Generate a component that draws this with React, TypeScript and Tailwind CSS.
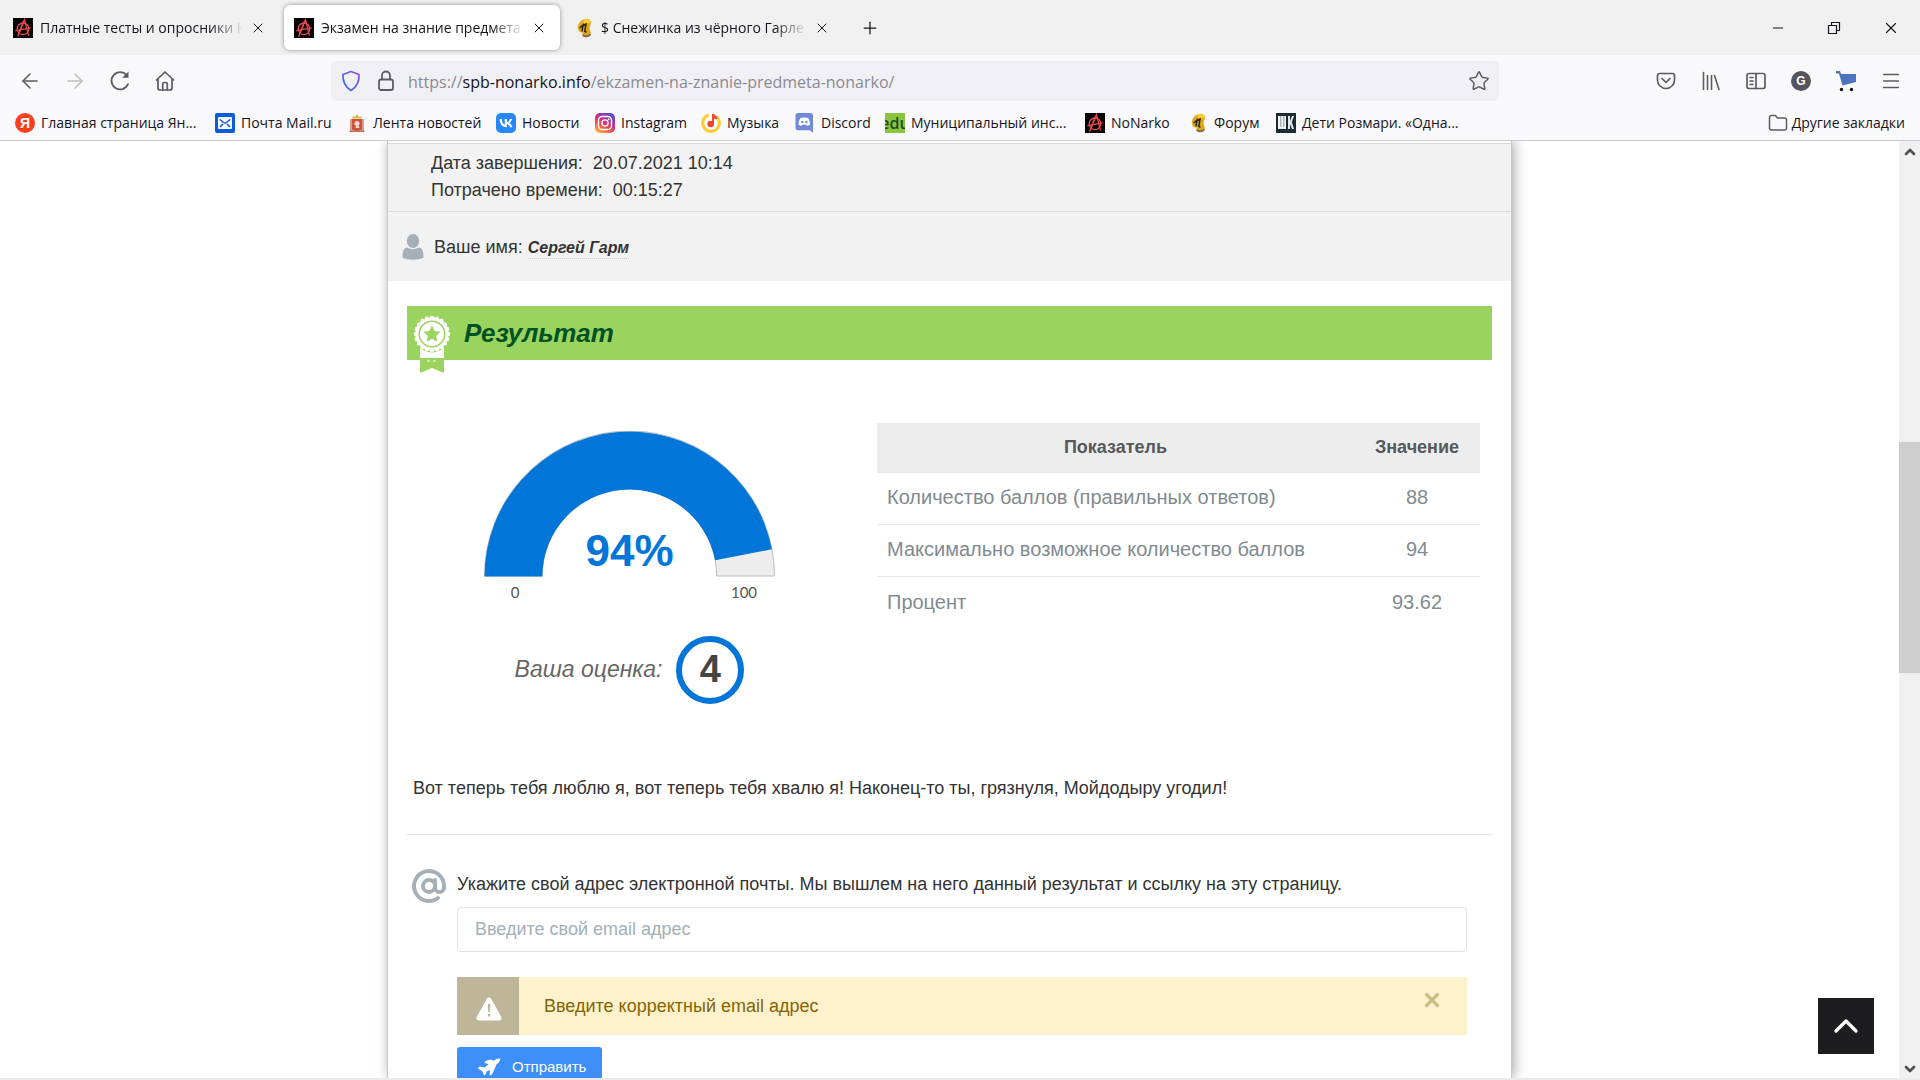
import React from "react";
import { ArrowLeft, ArrowRight, AtSign, ChevronUp, ChevronDown, Plus, X, Star, Menu, Minus } from "lucide-react";

function Anarchy() {
  return (
    <svg viewBox="0 0 20 20" className="size-5 shrink-0" aria-hidden="true">
      <rect width="20" height="20" fill="#050505" />
      <g fill="none" stroke="#e8494c" strokeWidth="1.300" strokeLinecap="round">
        <circle cx="10" cy="10.800" r="5.800" />
        <path d="M4.800 18 11.500 1.800l3.900 15.400" />
        <path d="M2.800 12.600 17.200 9.800M6.800 13.500 10.600 3" />
      </g>
    </svg>
  );
}

function Bee() {
  return (
    <svg viewBox="0 0 17 20" className="h-5 w-[17px] shrink-0" aria-hidden="true">
      <path d="M6.500 1.500c4-2 8 0 7.400 3.500-.4 2-1.400 3.500-1.400 5.500.4 2.500 1.800 4 1.200 5.500C12.500 19.500 8 20 5.500 18c-1-1 .5-2.500.5-3.500C3 15 .8 13 .8 9.800.8 6 3.500 2.800 6.500 1.500Z" fill="#dfa614" />
      <path d="M6.500 1.500c3-1.300 7-.3 7.400 2L11 5.500 6.500 4.500Z" fill="#f8cf3a" />
      <path d="M2.800 10 6 7l-1 6.500M6.500 7.500l2.500-1.300-1.200 7 1.600 1.300" fill="none" stroke="#2a2418" strokeWidth="1.500" />
      <path d="M6 16.300c2.500 1.200 5 1.200 7.500-.5l.4 1.200c-1.800 2.600-6 2.800-8.400 1Z" fill="#7a705a" />
    </svg>
  );
}

function Yandex() {
  return (
    <span className="flex size-5 shrink-0 items-center justify-center rounded-full bg-[#fc3f1d] font-['Liberation_Sans',sans-serif] text-sm leading-none font-bold text-white">Я</span>
  );
}

function MailRu() {
  return (
    <svg viewBox="0 0 20 20" className="size-5 shrink-0" aria-hidden="true">
      <rect width="20" height="20" rx="2" fill="#0b5cdb" />
      <rect x="3" y="4" width="14" height="12" rx="1" fill="#fff" />
      <path d="m5 6.500 3.500 3q1.500 1.200 3 0l3.500-3M5 14l3-3M15 14l-3-3" fill="none" stroke="#0b5cdb" strokeWidth="1.600" />
    </svg>
  );
}

function Crest() {
  return (
    <svg viewBox="0 0 20 20" className="size-5 shrink-0" aria-hidden="true">
      <path d="M5 5.500 6 3l2 1 2-3 2 3 2-1 1 2.500Z" fill="#d9b64a" />
      <path d="M3 6h3v12H3zM14 6h3v12h-3z" fill="#d3a184" />
      <path d="M5 6h10v10.500L10 19l-5-2.500Z" fill="#d0503f" />
      <path d="M8 8.500 11.500 8l1.500 3-1.500 1 1 3H8.500l.5-2.500-2-1Z" fill="#f1d9cf" />
      <path d="M2.500 17.500h15v1.500h-15z" fill="#b8735a" />
    </svg>
  );
}

function Vk() {
  return (
    <svg viewBox="0 0 20 20" className="size-5 shrink-0" aria-hidden="true">
      <rect width="20" height="20" rx="5" fill="#2787f5" />
      <path d="M10.700 14.200C6.200 14.200 3.700 11.100 3.600 6h2.200c.1 3.700 1.700 5.300 3 5.600V6h2.100v3.200c1.300-.1 2.600-1.600 3.100-3.200h2.100c-.4 2-1.800 3.400-2.900 4 1 .5 2.600 1.700 3.200 4.200h-2.300c-.5-1.500-1.700-2.700-3.200-2.900v2.900Z" fill="#fff" />
    </svg>
  );
}

function Instagram() {
  return (
    <svg viewBox="0 0 20 20" className="size-5 shrink-0" aria-hidden="true">
      <defs>
        <linearGradient id="ig" x1="0.1" y1="1" x2="0.7" y2="0">
          <stop offset="0" stopColor="#fdc14a" />
          <stop offset="0.35" stopColor="#f3563d" />
          <stop offset="0.6" stopColor="#cf2c86" />
          <stop offset="1" stopColor="#5b48cf" />
        </linearGradient>
      </defs>
      <rect width="20" height="20" rx="5" fill="url(#ig)" />
      <g fill="none" stroke="#fff" strokeWidth="1.400">
        <rect x="3.500" y="3.500" width="13" height="13" rx="3.800" />
        <circle cx="10" cy="10" r="3.100" />
      </g>
      <circle cx="13.700" cy="6.300" r="0.900" fill="#fff" />
    </svg>
  );
}

function Music() {
  return (
    <svg viewBox="0 0 20 20" className="size-5 shrink-0" aria-hidden="true">
      <circle cx="10" cy="10" r="8.300" fill="#fff" stroke="#fc3" strokeWidth="3.200" strokeDasharray="44 8" strokeDashoffset="-1" transform="rotate(-58 10 10)" />
      <circle cx="9.700" cy="11" r="3.300" fill="#f5412e" />
      <path d="M11 1h2l3.500 3.500-1 2L13 5.500V11h-2Z" fill="#f5412e" />
    </svg>
  );
}

function Discord() {
  return (
    <svg viewBox="0 0 20 20" className="size-5 shrink-0" aria-hidden="true">
      <path d="M3 0h12.500A2.500 2.500 0 0 1 18 2.500V20l-3-2.700H3A2.500 2.500 0 0 1 .5 14.800V2.500A2.500 2.500 0 0 1 3 0Z" fill="#7289da" />
      <path d="M5 5.500c2-1.300 6.500-1.300 8.500 0 1 2 1.600 4 1.500 6-1 .9-2 1.300-3 1.500l-.7-1.200H7.200L6.500 13c-1-.2-2-.6-3-1.500 0-2 .5-4 1.500-6Z" fill="#fff" />
      <circle cx="7.300" cy="9" r="1.200" fill="#7289da" />
      <circle cx="11.300" cy="9" r="1.200" fill="#7289da" />
    </svg>
  );
}

function Edu() {
  return (
    <span className="flex size-5 shrink-0 items-center justify-center overflow-hidden bg-[#8bc53f] font-['Open_Sans',sans-serif] text-base leading-none font-semibold text-[#1c4a20]">edu</span>
  );
}

function Shk() {
  return (
    <svg viewBox="0 0 20 20" className="size-5 shrink-0" aria-hidden="true">
      <rect width="20" height="20" fill="#1b2a33" />
      <path d="M2 3h2.300v11h1V3h2v11h1V3H10v13H2ZM12 3h2v5l2-5h2l-2.200 6L18 16h-2l-2-5v5h-2Z" fill="#e4e9ec" />
      <path d="M2 3h8v12H2z" fill="#ffffff" fillOpacity="0.500" />
    </svg>
  );
}

function Tab({ icon, title, active }: { icon: React.ReactNode; title: string; active?: boolean }) {
  return (
    <div
      className={
        active
          ? "flex h-[45px] w-[276px] items-center gap-[7px] rounded-md bg-white pr-[13px] pl-[10px] shadow-[0_0_4px_rgba(0,0,0,0.4)]"
          : "flex h-[45px] w-[277px] items-center gap-[7px] pr-[14px] pl-[10px]"
      }
    >
      {icon}
      <span className="min-w-0 flex-1 overflow-hidden whitespace-nowrap [mask-image:linear-gradient(to_left,transparent,black_32px)]">
        {title}
      </span>
      <button type="button" aria-label="Закрыть вкладку" className="shrink-0">
        <X className="size-4" strokeWidth={1.5} />
      </button>
    </div>
  );
}

const bookmarks = [
  { icon: <Yandex />, label: "Главная страница Ян...", width: "w-[200px]" },
  { icon: <MailRu />, label: "Почта Mail.ru", width: "w-[132px]" },
  { icon: <Crest />, label: "Лента новостей", width: "w-[149px]" },
  { icon: <Vk />, label: "Новости", width: "w-[99px]" },
  { icon: <Instagram />, label: "Instagram", width: "w-[106px]" },
  { icon: <Music />, label: "Музыка", width: "w-[94px]" },
  { icon: <Discord />, label: "Discord", width: "w-[90px]" },
  { icon: <Edu />, label: "Муниципальный инс...", width: "w-[200px]" },
  { icon: <Anarchy />, label: "NoNarko", width: "w-[106px]" },
  { icon: <Bee />, label: "Форум", width: "w-[85px]" },
  { icon: <Shk />, label: "Дети Розмари. «Одна...", width: "w-[200px]" },
];

function Toolbar() {
  return (
    <div className="flex h-[51px] items-center px-[18px] text-[#5b5b66]">
      <nav className="flex items-center gap-[21px]">
        <button type="button" aria-label="Назад"><ArrowLeft className="size-6" strokeWidth={1.6} /></button>
        <button type="button" aria-label="Вперёд" className="text-[#bdbdc3]"><ArrowRight className="size-6" strokeWidth={1.6} /></button>
        <button type="button" aria-label="Обновить">
          <svg viewBox="0 0 24 24" className="size-6" fill="none" stroke="currentColor" strokeWidth="1.800" strokeLinecap="round">
            <path d="M20 15.200A8.600 8.600 0 1 1 18.800 6.400" />
            <path d="M20.500 2.500v6.300h-6.300Z" fill="currentColor" stroke="none" />
          </svg>
        </button>
        <button type="button" aria-label="Домой">
          <svg viewBox="0 0 24 24" className="size-6" fill="none" stroke="currentColor" strokeWidth="1.700" strokeLinejoin="round" strokeLinecap="round">
            <path d="M3.500 11 12 3 20.500 11M5 10v9a2 2 0 0 0 2 2h10a2 2 0 0 0 2-2v-9" />
            <path d="M9.700 21v-6a1.500 1.500 0 0 1 1.500-1.500h1.600a1.500 1.500 0 0 1 1.500 1.500v6" />
          </svg>
        </button>
      </nav>
      <div className="ml-[154px] flex h-10 flex-1 items-center rounded-[5px] bg-[#f0f0f4] px-[9px]">
        <svg viewBox="0 0 22 22" className="size-[22px] shrink-0" fill="none" strokeWidth="1.700" strokeLinejoin="round" aria-hidden="true">
          <defs>
            <linearGradient id="shield" x1="0" y1="1" x2="1" y2="0">
              <stop offset="0" stopColor="#2d6bf0" />
              <stop offset="1" stopColor="#8f4fe8" />
            </linearGradient>
          </defs>
          <path d="M11 1.500 19 4.500c.3 6-1.500 12-8 16-6.500-4-8.300-10-8-16Z" stroke="url(#shield)" />
        </svg>
        <svg viewBox="0 0 22 22" className="ml-[13px] size-[22px] shrink-0" fill="none" stroke="currentColor" strokeWidth="1.800" aria-hidden="true">
          <rect x="4" y="9.500" width="14" height="10.500" rx="2" />
          <path d="M7 9.500V5.500a4 4 0 0 1 8 0v4" />
        </svg>
        <p className="ml-[11px] flex-1 pt-[2px] font-['Open_Sans',sans-serif] text-base whitespace-nowrap text-[#8a8a92]">
          https://<span className="text-[#15141a]">spb-nonarko.info</span>/ekzamen-na-znanie-predmeta-nonarko/
        </p>
        <button type="button" aria-label="Добавить в закладки"><Star className="size-[22px]" strokeWidth={1.6} /></button>
      </div>
      <div className="ml-[156px] flex items-center gap-[23px]">
        <button type="button" aria-label="Pocket">
          <svg viewBox="0 0 22 22" className="size-[22px]" fill="none" stroke="currentColor" strokeWidth="1.700" strokeLinecap="round" strokeLinejoin="round">
            <path d="M4.500 3.500h13a2 2 0 0 1 2 2V10a8.500 8.500 0 0 1-17 0V5.500a2 2 0 0 1 2-2Z" />
            <path d="m7 8.500 4 4 4-4" />
          </svg>
        </button>
        <button type="button" aria-label="Библиотека">
          <svg viewBox="0 0 22 22" className="size-[22px]" fill="none" stroke="currentColor" strokeWidth="1.600" strokeLinecap="round">
            <path d="M3.500 2.500v17M7.500 5.500v14M11.500 5.500v14M14.500 5.500l4.500 14" />
          </svg>
        </button>
        <button type="button" aria-label="Боковая панель">
          <svg viewBox="0 0 22 22" className="size-[22px]" fill="none" stroke="currentColor" strokeWidth="1.700" strokeLinecap="round">
            <rect x="2" y="3.500" width="18" height="15" rx="2" />
            <path d="M11 3.500v15M5 7.500h3M5 11h3M5 14.500h3" />
          </svg>
        </button>
        <button type="button" aria-label="Профиль" className="flex size-[22px] items-center justify-center">
          <span className="flex size-5 items-center justify-center rounded-full bg-[#55555f] font-['Liberation_Sans',sans-serif] text-xs font-bold text-white">G</span>
        </button>
        <button type="button" aria-label="Корзина">
          <svg viewBox="0 0 22 22" className="size-[22px]">
            <path d="M1 1h4l1 3H21v8L7.500 15.500 4 3.500H1Z" fill="#4a74bd" />
            <circle cx="6.500" cy="19.500" r="1.700" fill="#111" />
            <circle cx="16.500" cy="19.500" r="1.700" fill="#111" />
          </svg>
        </button>
        <button type="button" aria-label="Меню">
          <Menu className="size-[22px]" strokeWidth={1.7} />
        </button>
      </div>
    </div>
  );
}

function Chrome() {
  return (
    <header className="relative z-10 shrink-0 border-b border-[#cccccf] bg-[#f9f9fb] font-['Open_Sans','Noto_Sans',sans-serif] text-sm text-[#15141a]">
      <div className="flex h-[55px] items-center bg-[#f0f0f0] pl-[3px]">
        <Tab icon={<Anarchy />} title="Платные тесты и опросники Н" />
        <div className="ml-1">
          <Tab active icon={<Anarchy />} title="Экзамен на знание предмета" />
        </div>
        <div className="ml-[7px]">
          <Tab icon={<Bee />} title="$ Снежинка из чёрного Гарле" />
        </div>
        <button type="button" aria-label="Новая вкладка" className="ml-4"><Plus className="size-5" strokeWidth={1.5} /></button>
        <div className="mr-5 ml-auto flex items-center gap-[40px]">
          <button type="button" aria-label="Свернуть"><Minus className="size-4" strokeWidth={1.6} /></button>
          <button type="button" aria-label="Восстановить">
            <svg viewBox="0 0 16 16" className="size-4" fill="none" stroke="currentColor" strokeWidth="1.200">
              <path d="M2.500 5.500h8v8h-8zM5.500 5.500v-3h8v8h-3" />
            </svg>
          </button>
          <button type="button" aria-label="Закрыть"><X className="size-[18px]" strokeWidth={1.5} /></button>
        </div>
      </div>
      <Toolbar />
      <nav className="flex h-[34px] items-center px-[15px]">
        {bookmarks.map((b) => (
          <a key={b.label} href="#" className={"flex shrink-0 items-center gap-[6px] whitespace-nowrap " + b.width}>
            {b.icon}
            {b.label}
          </a>
        ))}
        <a href="#" className="ml-auto flex items-center gap-1 whitespace-nowrap">
          <svg viewBox="0 0 20 20" className="size-5" fill="none" stroke="#5b5b66" strokeWidth="1.500" aria-hidden="true">
            <path d="M1.500 15V4.500a2 2 0 0 1 2-2h4l2 2.500h7a2 2 0 0 1 2 2V15a2 2 0 0 1-2 2h-13a2 2 0 0 1-2-2Z" />
          </svg>
          Другие закладки
        </a>
      </nav>
    </header>
  );
}

function Medal() {
  const teeth = Array.from({ length: 20 }, (_, i) => (i * Math.PI) / 10);
  return (
    <svg viewBox="0 0 38 60" className="h-[60px] w-[38px]" aria-hidden="true">
      <path d="M7 34h24v10H7z" fill="#fff" />
      <path d="M7 46h24v13l-12-5-12 5Z" fill="#9ad45f" />
      <path d="M14 47h3M20 47h3" stroke="#fff" strokeWidth="1" />
      <circle cx="19" cy="20" r="18.500" fill="#9ad45f" />
      <circle cx="19" cy="20" r="16.500" fill="#fff" />
      {teeth.map((a) => (
        <circle key={a} cx={19 + 16 * Math.cos(a)} cy={20 + 16 * Math.sin(a)} r="2.200" fill="#fff" />
      ))}
      <circle cx="19" cy="20" r="12.800" fill="none" stroke="#9ad45f" strokeWidth="1.500" />
      <path d="m19 11.500 2.600 5.400 5.900.8-4.300 4.100 1.100 5.900-5.300-2.900-5.300 2.900 1.100-5.900-4.300-4.100 5.900-.8Z" fill="#9ad45f" />
    </svg>
  );
}

function Gauge() {
  return (
    <div className="flex w-[291px] flex-col">
      <div className="relative">
        <svg viewBox="0 0 292 146" className="block w-full" role="img" aria-label="94%">
          <path d="M.5 145.500A145.500 145.500 0 0 1 291.500 145.500H233.500A87.500 87.500 0 0 0 58.500 145.500Z" fill="#ededed" stroke="#bdbdbd" strokeWidth="1" />
          <path d="M.5 146A145.500 145.500 0 0 1 288.900 118.700L231.900 129.600A87.500 87.500 0 0 0 58.500 146Z" fill="#0275d8" />
        </svg>
        <strong className="absolute inset-x-0 bottom-0 text-center text-[44px] leading-[52px] text-[#0275d8]">94%</strong>
      </div>
      <div className="flex justify-between px-[2px] pt-[5px] font-['Lato',sans-serif] text-[15px] leading-5 text-[#555]">
        <span className="w-[58px] text-center">0</span>
        <span className="w-[58px] text-center">100</span>
      </div>
    </div>
  );
}

const rows = [
  ["Количество баллов (правильных ответов)", "88"],
  ["Максимально возможное количество баллов", "94"],
  ["Процент", "93.62"],
];

function ResultTable() {
  return (
    <table className="w-full border-collapse text-[20px] text-[#818a91]">
      <thead>
        <tr className="h-[49px] border-b border-[#e3e5e7] bg-[#ededed] text-lg text-[#55595c]">
          <th>Показатель</th>
          <th className="w-[126px]">Значение</th>
        </tr>
      </thead>
      <tbody>
        {rows.map(([name, value]) => (
          <tr key={name} className="h-[52px] border-b border-[#e3e5e7] last:border-0">
            <td className="px-[10px]">{name}</td>
            <td className="text-center">{value}</td>
          </tr>
        ))}
      </tbody>
    </table>
  );
}

function EmailForm() {
  return (
    <form className="flex gap-[10px] pt-[33px] pr-[25px] pl-1">
      <AtSign className="size-9 shrink-0 text-[#a4afb7]" strokeWidth={2.6} aria-hidden="true" />
      <div className="flex min-w-0 flex-1 flex-col items-stretch">
        <label htmlFor="email" className="pt-[3px] leading-[27px]">
          Укажите свой адрес электронной почты. Мы вышлем на него данный результат и ссылку на эту страницу.
        </label>
        <input
          id="email"
          type="email"
          placeholder="Введите свой email адрес"
          className="mt-[9px] h-[45px] rounded border border-[#e1e3e5] px-[17px] placeholder:text-[#a4afb7]"
        />
        <div role="alert" className="mt-[25px] flex h-[58px] bg-[#fef2cd] text-[#856404]">
          <div className="flex w-[62px] items-center justify-center bg-[#bfb599] pt-[6px] pl-[2px]">
            <svg viewBox="0 0 26 24" className="h-6 w-[26px]" aria-hidden="true">
              <path d="M13 3 23 21H3Z" fill="#fff" stroke="#fff" strokeWidth="5" strokeLinejoin="round" />
              <path d="M11.800 7h2.600l-.5 8h-1.600ZM11.800 17h2.500v2.500h-2.500Z" fill="#bfb599" />
            </svg>
          </div>
          <span className="flex-1 self-center pl-[25px]">Введите корректный email адрес</span>
          <button type="button" aria-label="Закрыть" className="mt-3 mr-6 self-start text-[#cbbd86]">
            <X className="size-[22px]" strokeWidth={3.5} />
          </button>
        </div>
        <button type="submit" className="mt-3 flex h-[42px] w-[145px] shrink-0 items-center gap-[11px] self-start rounded-[3px] bg-[#3e8ef7] pb-[2px] pl-5 text-[15px] text-white">
          <svg viewBox="0 0 24 18" className="h-[18px] w-6" fill="#fff" aria-hidden="true">
            <path d="M23.500.5c-3-.4-5 1-7 2.300L14 1.500 8.500 3 7.500 5l4 1-3.500 3.500-5-1L.5 10l5 3.500 1.500 4 2-1.500.5-2.500 3.500-1.500-.5 5.500 2.500-1L19.500 6.500c2-1.500 3.500-3.500 4-6Z" />
          </svg>
          Отправить
        </button>
      </div>
    </form>
  );
}

export default function App() {
  return (
    <div className="flex h-screen flex-col overflow-hidden bg-white font-['Liberation_Sans',Arial,sans-serif] text-lg text-[#333]">
      <Chrome />
      <div className="relative flex min-h-0 flex-1">
        <main className="flex min-w-0 flex-1 justify-center overflow-hidden">
          <article className="w-full max-w-[1125px] self-stretch border-x border-[#c8c8c8] bg-white shadow-[2px_0_12px_rgba(0,0,0,0.35)]">
            <section className="mt-[2px] border-y border-[#d9d9d9] bg-[#f2f2f2] pt-[6px] pb-[7px] pl-[43px]">
              <p className="leading-[27px]">Дата завершения: <span className="ml-[5px]">20.07.2021 10:14</span></p>
              <p className="leading-[27px]">Потрачено времени: <span className="ml-[5px]">00:15:27</span></p>
            </section>
            <section className="flex h-[69px] items-center gap-[10px] bg-[#f2f2f2] pl-[14px]">
              <svg viewBox="0 0 22 26" className="h-[26px] w-[22px]" fill="#a4afb7" aria-hidden="true">
                <ellipse cx="11" cy="7" rx="6.200" ry="7" />
                <path d="M5 13.500q6 3.500 12 0c3 .8 4.500 3 4.500 10C17 26.500 5 26.500.5 23.500c0-7 1.500-9.200 4.500-10Z" />
              </svg>
              <p>
                Ваше имя:{" "}
                <em className="border-b border-dotted border-[#ccc] pb-[2px] text-base font-bold">Сергей Гарм</em>
              </p>
            </section>
            <div className="px-[19px]">
              <section className="relative mt-[25px] flex h-[54px] items-center bg-[#9ad45f] pl-[57px]">
                <div className="absolute top-2 left-[6px]"><Medal /></div>
                <h2 className="text-[26px] font-bold text-[#015223] italic">Результат</h2>
              </section>
              <section className="flex pt-[63px] pr-3">
                <div className="flex flex-1 flex-col items-center pt-2 pr-[25px]">
                  <Gauge />
                  <p className="mt-[34px] flex items-center gap-[14px] text-[23px] text-[#666] italic">
                    Ваша оценка:
                    <strong className="flex size-[68px] items-center justify-center rounded-full border-[6px] border-[#0275d8] text-[38px] text-[#444] not-italic">4</strong>
                  </p>
                </div>
                <div className="w-[603px]"><ResultTable /></div>
              </section>
              <p className="mt-[71px] border-b border-[#e3e5e7] pb-[32px] pl-[6px] leading-[27px]">
                Вот теперь тебя люблю я, вот теперь тебя хвалю я! Наконец-то ты, грязнуля, Мойдодыру угодил!
              </p>
              <EmailForm />
            </div>
          </article>
        </main>
        <button type="button" aria-label="Наверх" className="absolute right-[46px] bottom-6 flex size-14 items-center justify-center bg-[#1d1d1f] text-white">
          <ChevronUp className="size-10" strokeWidth={2} />
        </button>
        <aside className="flex w-[21px] flex-col items-center bg-[#f0f0f0] text-[#505050]">
          <ChevronUp className="mt-[3px] size-4" strokeWidth={4} />
          <div className="mt-[282px] h-[231px] w-full bg-[#cdcdcd]" />
          <ChevronDown className="mt-auto mb-[1px] size-4" strokeWidth={4} />
        </aside>
      </div>
      <div className="h-[2px] shrink-0 bg-[#ebebeb]" />
    </div>
  );
}
